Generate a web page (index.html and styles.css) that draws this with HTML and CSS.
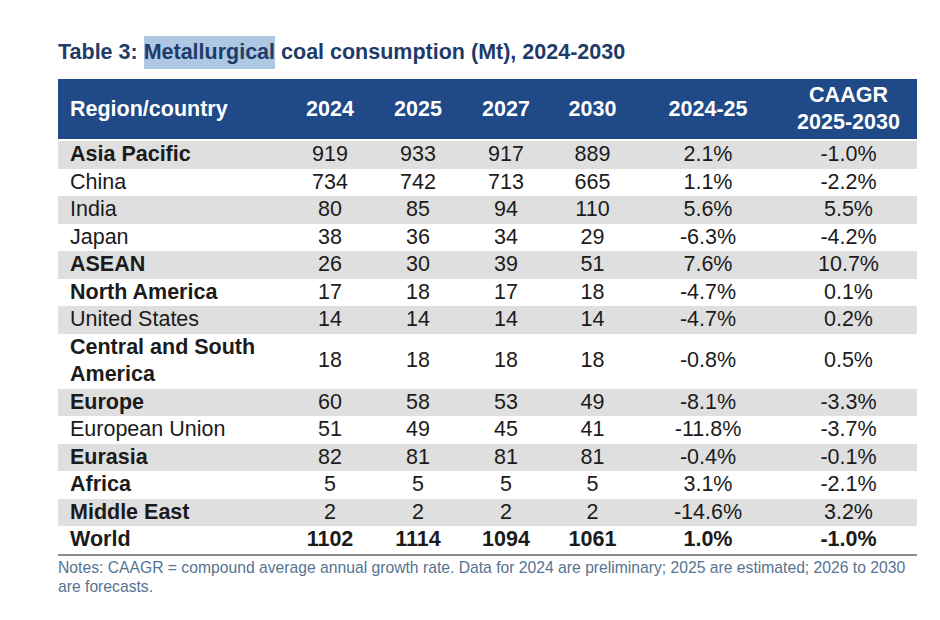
FILE: index.html
```html
<!DOCTYPE html>
<html lang="en">
<head>
<meta charset="utf-8">
<title>Table 3: Metallurgical coal consumption</title>
<link rel="stylesheet" href="styles.css">
</head>
<body>
<div class="page">
  <h1 class="title">Table 3: <span class="hl">Metallurgical</span> coal consumption (Mt), 2024-2030</h1>
  <table class="data">
    <colgroup>
      <col class="c-region"><col class="c-y1"><col class="c-y2"><col class="c-y3"><col class="c-y4"><col class="c-g1"><col class="c-g2">
    </colgroup>
    <thead>
      <tr>
        <th class="left">Region/country</th>
        <th>2024</th>
        <th>2025</th>
        <th>2027</th>
        <th>2030</th>
        <th>2024-25</th>
        <th>CAAGR<br>2025-2030</th>
      </tr>
    </thead>
    <tbody>
      <tr class="alt b"><td class="left">Asia Pacific</td><td>919</td><td>933</td><td>917</td><td>889</td><td>2.1%</td><td>-1.0%</td></tr>
      <tr><td class="left">China</td><td>734</td><td>742</td><td>713</td><td>665</td><td>1.1%</td><td>-2.2%</td></tr>
      <tr class="alt"><td class="left">India</td><td>80</td><td>85</td><td>94</td><td>110</td><td>5.6%</td><td>5.5%</td></tr>
      <tr><td class="left">Japan</td><td>38</td><td>36</td><td>34</td><td>29</td><td>-6.3%</td><td>-4.2%</td></tr>
      <tr class="alt b"><td class="left">ASEAN</td><td>26</td><td>30</td><td>39</td><td>51</td><td>7.6%</td><td>10.7%</td></tr>
      <tr class="b"><td class="left">North America</td><td>17</td><td>18</td><td>17</td><td>18</td><td>-4.7%</td><td>0.1%</td></tr>
      <tr class="alt"><td class="left">United States</td><td>14</td><td>14</td><td>14</td><td>14</td><td>-4.7%</td><td>0.2%</td></tr>
      <tr class="b"><td class="left">Central and South<br>America</td><td>18</td><td>18</td><td>18</td><td>18</td><td>-0.8%</td><td>0.5%</td></tr>
      <tr class="alt b"><td class="left">Europe</td><td>60</td><td>58</td><td>53</td><td>49</td><td>-8.1%</td><td>-3.3%</td></tr>
      <tr><td class="left">European Union</td><td>51</td><td>49</td><td>45</td><td>41</td><td>-11.8%</td><td>-3.7%</td></tr>
      <tr class="alt b"><td class="left">Eurasia</td><td>82</td><td>81</td><td>81</td><td>81</td><td>-0.4%</td><td>-0.1%</td></tr>
      <tr class="b"><td class="left">Africa</td><td>5</td><td>5</td><td>5</td><td>5</td><td>3.1%</td><td>-2.1%</td></tr>
      <tr class="alt b"><td class="left">Middle East</td><td>2</td><td>2</td><td>2</td><td>2</td><td>-14.6%</td><td>3.2%</td></tr>
      <tr class="total"><td class="left">World</td><td>1102</td><td>1114</td><td>1094</td><td>1061</td><td>1.0%</td><td>-1.0%</td></tr>
    </tbody>
  </table>
  <p class="notes">Notes: CAAGR = compound average annual growth rate. Data for 2024 are preliminary; 2025 are estimated; 2026 to 2030 are forecasts.</p>
</div>
</body>
</html>
```

FILE: styles.css
```css
html, body {
  margin: 0;
  padding: 0;
  background: #ffffff;
}

.page {
  font-family: "Liberation Sans", Arial, sans-serif;
  padding: 36px 0 0 58px;
  width: 859px;
}

.title {
  margin: 0 0 11px 0;
  font-size: 21.5px;
  line-height: 32px;
  font-weight: bold;
  color: #1f3b69;
}

.hl {
  background: #aec7e2;
  padding: 4px 0 5px 0;
}

.data {
  width: 859px;
  table-layout: fixed;
  border-collapse: collapse;
  border-spacing: 0;
  font-size: 21.5px;
  color: #1b1b1b;
}

.c-region { width: 229px; }
.c-y1 { width: 86px; }
.c-y2 { width: 90px; }
.c-y3 { width: 86px; }
.c-y4 { width: 87px; }
.c-g1 { width: 144px; }
.c-g2 { width: 137px; }

.data thead th {
  background: #1f4a87;
  color: #ffffff;
  font-weight: bold;
  height: 60px;
  padding: 0;
  line-height: 27px;
  text-align: center;
  border-bottom: 2px solid #ffffff;
}

.data th.left,
.data td.left {
  text-align: left;
  padding-left: 12px;
}

.data td {
  padding: 0;
  line-height: 27.5px;
  text-align: center;
  font-weight: normal;
}

.data tr.alt td {
  background: #dfdfdf;
}

.data tr.b td.left {
  font-weight: bold;
}

.data tr.total td {
  font-weight: bold;
  border-bottom: 2px solid #8c8c8c;
}

.notes {
  margin: 2px 0 0 0;
  font-size: 15.7px;
  line-height: 19px;
  color: #557491;
}
```
